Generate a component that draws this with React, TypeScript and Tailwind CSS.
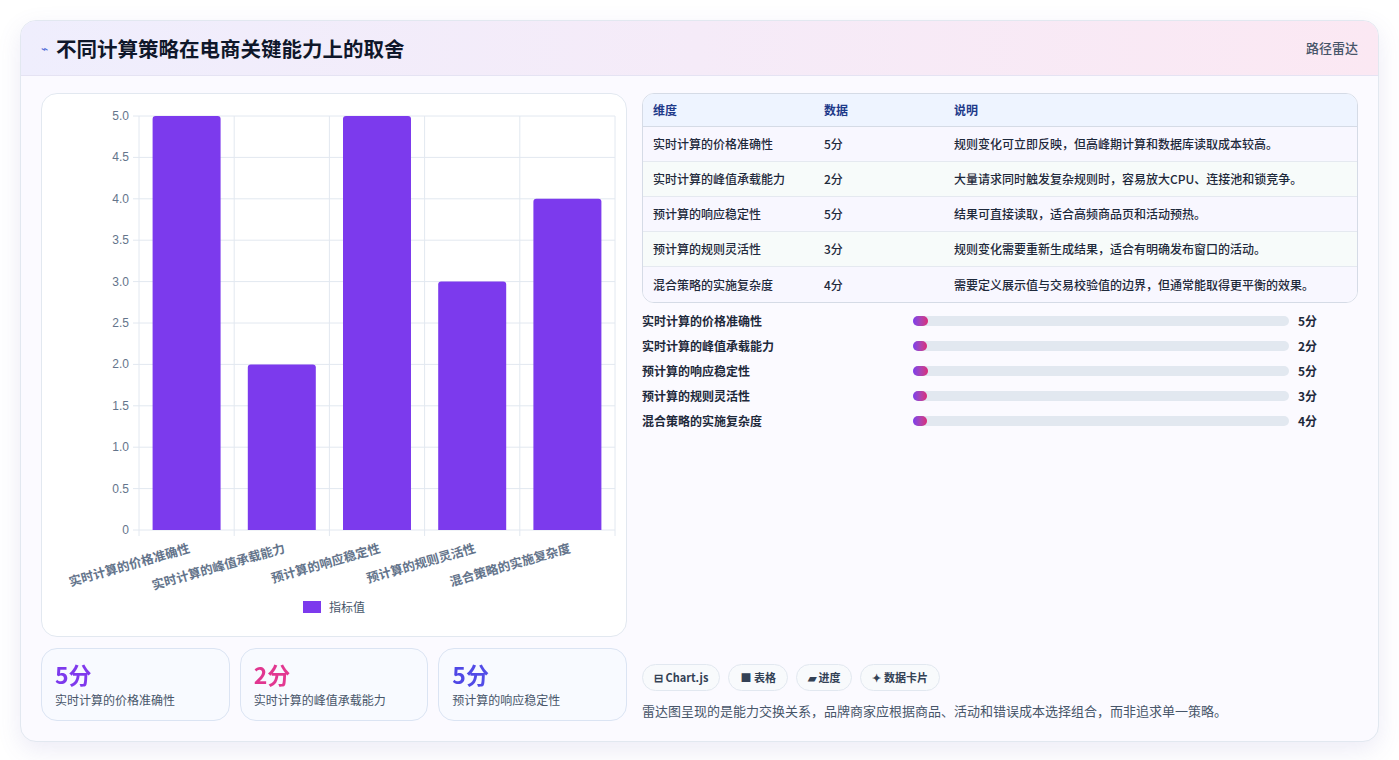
import React from "react";

const rows = [
  { name: "实时计算的价格准确性", score: 5, desc: "规则变化可立即反映，但高峰期计算和数据库读取成本较高。" },
  { name: "实时计算的峰值承载能力", score: 2, desc: "大量请求同时触发复杂规则时，容易放大CPU、连接池和锁竞争。" },
  { name: "预计算的响应稳定性", score: 5, desc: "结果可直接读取，适合高频商品页和活动预热。" },
  { name: "预计算的规则灵活性", score: 3, desc: "规则变化需要重新生成结果，适合有明确发布窗口的活动。" },
  { name: "混合策略的实施复杂度", score: 4, desc: "需要定义展示值与交易校验值的边界，但通常能取得更平衡的效果。" },
];

const font = { fontFamily: '"Noto Sans CJK SC", "Noto Sans", sans-serif' };

function BarChart() {
  const W = 586;
  const H = 500;
  const x0 = 97;
  const x1 = 573;
  const y0 = 22;
  const y1 = 436;
  const step = (x1 - x0) / 5;
  const ticks = [0, 0.5, 1, 1.5, 2, 2.5, 3, 3.5, 4, 4.5, 5];
  const yOf = (v: number) => y1 - ((y1 - y0) * v) / 5;
  return (
    <svg width={W} height={H} className="block">
      {ticks.map((t) => (
        <g key={t}>
          <line x1={x0 - 6} x2={x1} y1={yOf(t)} y2={yOf(t)} stroke="#e2e8f0" />
          <text x={x0 - 10} y={yOf(t) + 4} textAnchor="end" fontSize="12" fill="#64748b" fontFamily="Liberation Sans, sans-serif">
            {t === 0 ? "0" : t.toFixed(1)}
          </text>
        </g>
      ))}
      {[0, 1, 2, 3, 4, 5].map((i) => (
        <line key={i} x1={x0 + i * step} x2={x0 + i * step} y1={y0} y2={y1 + 6} stroke="#e2e8f0" />
      ))}
      {rows.map((r, i) => {
        const cx = x0 + step * (i + 0.5);
        const ax = cx + 4;
        const ay = y1 + 22;
        return (
          <g key={r.name}>
            <path
              d={`M${cx - 34} ${y1} V${yOf(r.score) + 3} Q${cx - 34} ${yOf(r.score)} ${cx - 31} ${yOf(r.score)} H${cx + 31} Q${cx + 34} ${yOf(r.score)} ${cx + 34} ${yOf(r.score) + 3} V${y1} Z`}
              fill="#7c3aed"
            />
            <text
              x={ax}
              y={ay}
              textAnchor="end"
              fontSize="12.5"
              fontWeight="600"
              fill="#64748b"
              transform={`rotate(-16 ${ax} ${ay})`}
              style={font}
            >
              {r.name}
            </text>
          </g>
        );
      })}
    </svg>
  );
}

export default function App() {
  return (
    <div className="min-h-screen bg-white p-5" style={font}>
      <div className="rounded-2xl border border-[#e2e8f0] bg-[#fbfaff] shadow-[0_8px_24px_rgba(100,90,180,0.12)] overflow-hidden">
        <div className="flex h-[55px] items-center justify-between border-b border-[#e5e3f3] bg-gradient-to-r from-[#efeefd] to-[#fbe8f3] px-5">
          <div className="flex items-center gap-2">
            <span className="text-[12px] text-[#4f6bd8]">⌁</span>
            <h1 className="text-[20.5px] font-bold text-[#0f172a]">不同计算策略在电商关键能力上的取舍</h1>
          </div>
          <span className="text-[13px] font-medium text-[#475569]">路径雷达</span>
        </div>
        <div className="flex gap-[15px] p-5 pt-[17px]">
          <div className="flex w-[586px] shrink-0 flex-col gap-[11px]">
            <div className="h-[544px] rounded-2xl border border-[#e2e8f0] bg-white">
              <BarChart />
              <div className="mt-[4px] flex items-center justify-center gap-2 text-[12px] text-[#475569]">
                <span className="h-[12px] w-[18px] bg-[#7c3aed]" />
                指标值
              </div>
            </div>
            <div className="grid grid-cols-3 gap-[10px]">
              {[
                { v: "5分", c: "from-[#7c3aed] to-[#9333ea]", l: rows[0].name },
                { v: "2分", c: "from-[#e0358f] to-[#ec4899]", l: rows[1].name },
                { v: "5分", c: "from-[#4f46e5] to-[#6366f1]", l: rows[2].name },
              ].map((s, i) => (
                <div key={i} className="h-[73px] rounded-2xl border border-[#dbe4f3] bg-[#f8faff] px-[13px] pt-[10px]">
                  <div className={`bg-gradient-to-r ${s.c} bg-clip-text text-[23px] font-bold leading-[30px] text-transparent`}>{s.v}</div>
                  <div className="mt-[2px] text-[12px] text-[#475569]">{s.l}</div>
                </div>
              ))}
            </div>
          </div>
          <div className="flex flex-1 flex-col">
            <div className="overflow-hidden rounded-xl border border-[#d5dbe6] bg-white">
              <div className="flex h-[33px] items-center border-b border-[#d5dbe6] bg-[#eef4ff] text-[12px] font-semibold text-[#1e3a8a]">
                <div className="w-[181px] pl-[10px]">维度</div>
                <div className="w-[130px]">数据</div>
                <div>说明</div>
              </div>
              {rows.map((r, i) => (
                <div
                  key={r.name}
                  className={`flex h-[35px] items-center text-[12px] font-medium text-[#1e293b] ${i % 2 === 0 ? "bg-[#f8f7ff]" : "bg-[#f7fbfa]"} ${i < 4 ? "border-b border-[#e5e9f0]" : ""}`}
                >
                  <div className="w-[181px] pl-[10px]">{r.name}</div>
                  <div className="w-[130px]">{r.score}分</div>
                  <div>{r.desc}</div>
                </div>
              ))}
            </div>
            <div className="mt-[9px] flex flex-col gap-[7px]">
              {rows.map((r) => (
                <div key={r.name} className="flex h-[18px] items-center text-[12px] font-semibold text-[#1e293b]">
                  <div className="w-[271px]">{r.name}</div>
                  <div className="h-[10px] w-[376px] rounded-full bg-[#e2e8f0]">
                    <div className="h-[10px] rounded-full bg-gradient-to-r from-[#7c3aed] to-[#db2777]" style={{ width: `${r.score * 0.8}%`, minWidth: 14 }} />
                  </div>
                  <div className="ml-[9px]">{r.score}分</div>
                </div>
              ))}
            </div>
            <div className="mt-auto flex gap-[8px]">
              {["⊟ Chart.js", "■ 表格", "▰ 进度", "✦ 数据卡片"].map((t) => (
                <span key={t} className="flex h-[27px] items-center rounded-full border border-[#e2e8f0] bg-[#f8fafc] px-[11px] text-[11px] font-semibold text-[#334155]">
                  {t}
                </span>
              ))}
            </div>
            <p className="mt-[10px] mb-[1px] text-[13px] text-[#475569]">雷达图呈现的是能力交换关系，品牌商家应根据商品、活动和错误成本选择组合，而非追求单一策略。</p>
          </div>
        </div>
      </div>
    </div>
  );
}
